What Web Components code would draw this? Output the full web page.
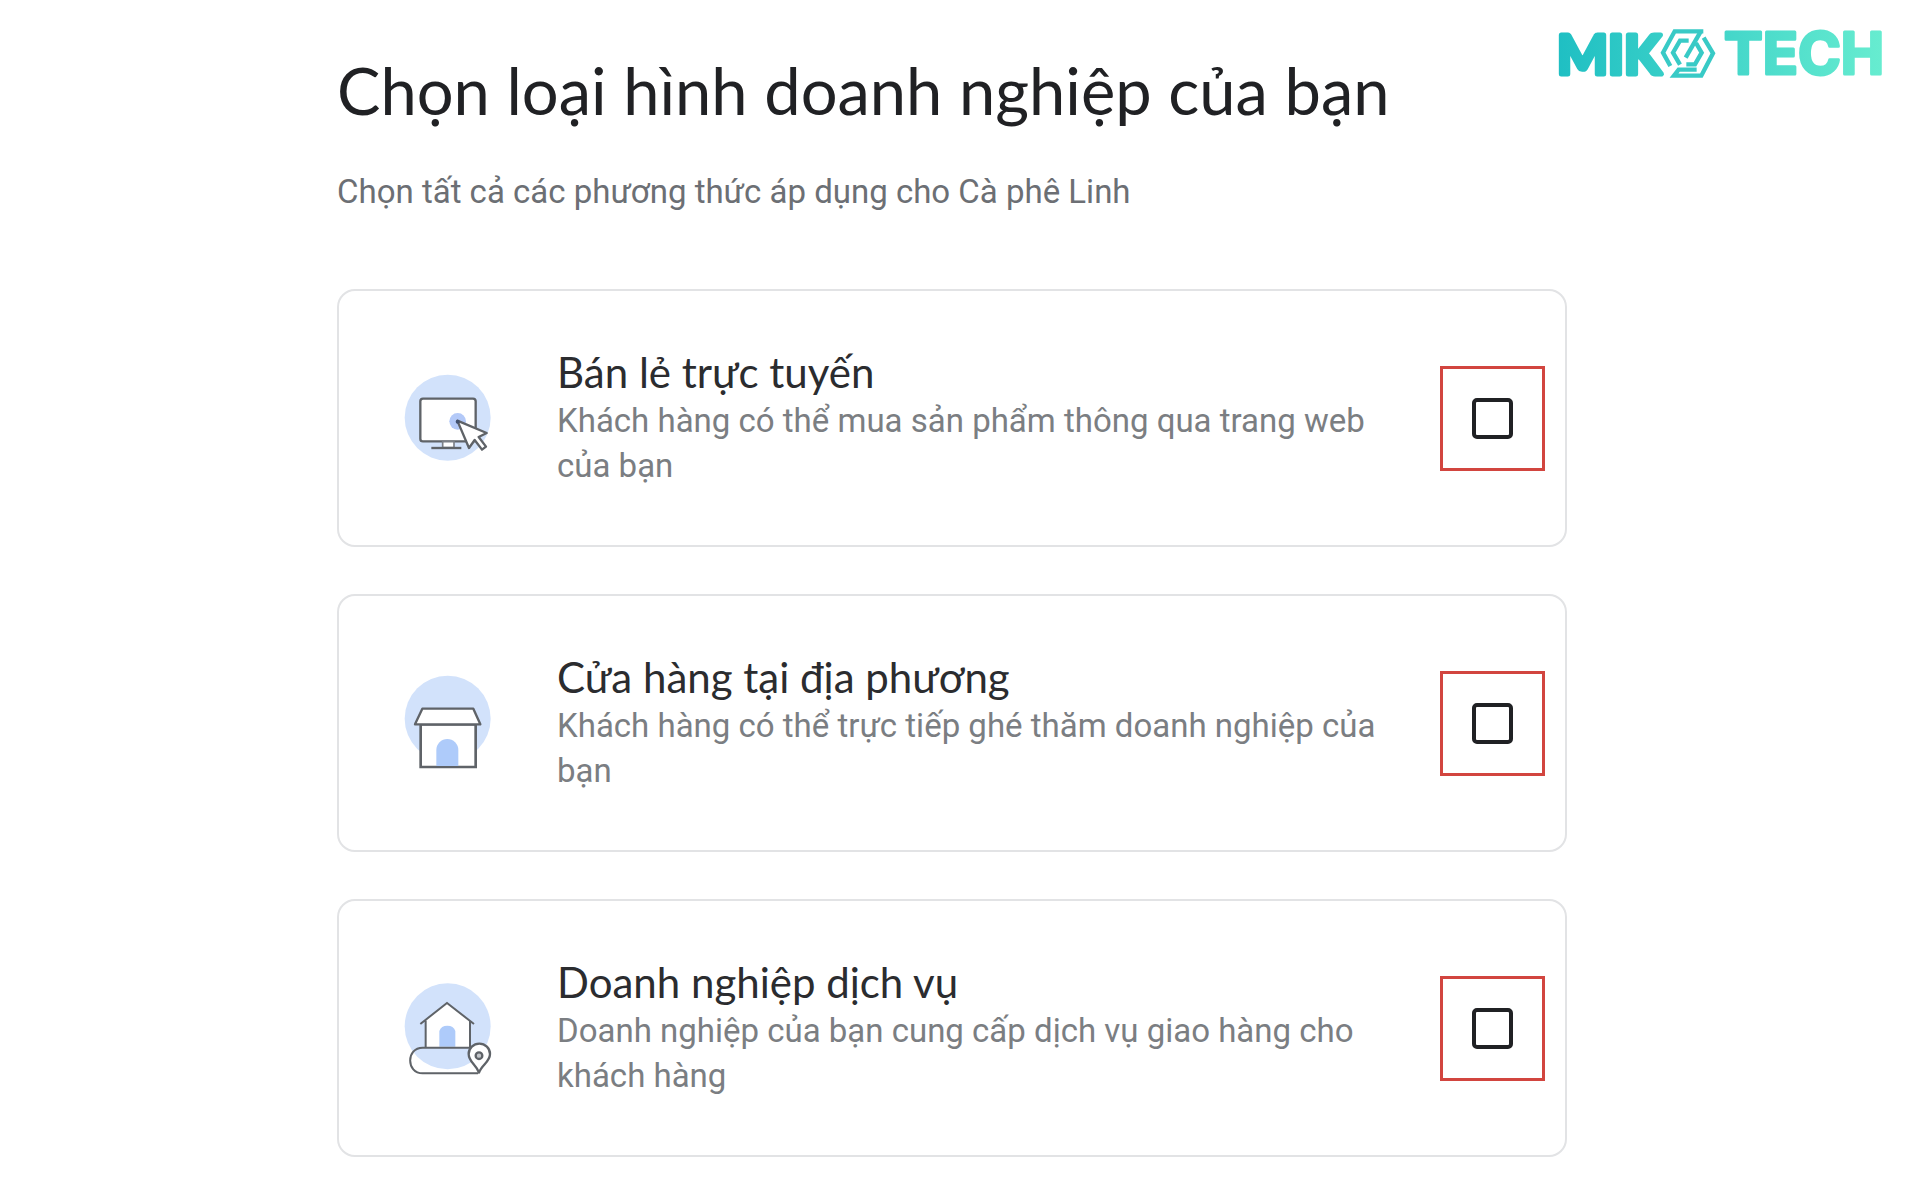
<!DOCTYPE html>
<html lang="vi">
<head>
<meta charset="UTF-8">
<meta name="viewport" content="width=device-width, initial-scale=1.0">
<title>Chọn loại hình doanh nghiệp của bạn</title>
<style>
  body { margin: 0; background-color: #fff; font-family: Roboto, "Open Sans", sans-serif; }
</style>
</head>
<body>
<business-page>
  <miko-logo slot="logo"></miko-logo>
  <span slot="title">Chọn loại hình doanh nghiệp của bạn</span>
  <span slot="subtitle">Chọn tất cả các phương thức áp dụng cho Cà phê Linh</span>
  <business-option icon="online">
    <span slot="name">Bán lẻ trực tuyến</span>
    Khách hàng có thể mua sản phẩm thông qua trang web của bạn
  </business-option>
  <business-option icon="store">
    <span slot="name">Cửa hàng tại địa phương</span>
    Khách hàng có thể trực tiếp ghé thăm doanh nghiệp của bạn
  </business-option>
  <business-option icon="service">
    <span slot="name">Doanh nghiệp dịch vụ</span>
    Doanh nghiệp của bạn cung cấp dịch vụ giao hàng cho khách hàng
  </business-option>
</business-page>

<script>
const icons = {
  online: `
    <svg viewBox="0 -4 360 360" aria-hidden="true">
      <circle cx="173" cy="175" r="129" fill="#d2e2fb"/>
      <rect x="91" y="118" width="166" height="128" rx="8" fill="#fff" stroke="#5f6368" stroke-width="7"/>
      <path d="M158 247h34v18h-34z" fill="#fff" stroke="#7c8086" stroke-width="5"/>
      <path d="M124 266h90" stroke="#5f6368" stroke-width="7"/>
      <circle cx="203" cy="186" r="25" fill="#b3c9f8"/>
      <path d="M202 184l35 82 17-24 22 29 12-9-22-29 24-12z" fill="#fff" stroke="#5f6368" stroke-width="7" stroke-linejoin="round"/>
      <circle cx="203" cy="187" r="6" fill="#41506e"/>
    </svg>`,
  store: `
    <svg viewBox="0 10 360 360" aria-hidden="true">
      <circle cx="173" cy="177" r="129" fill="#d2e2fb"/>
      <path d="M92 194h165v128H92z" fill="#fff" stroke="#5f6368" stroke-width="8"/>
      <path d="M97 147h153l21 47H75z" fill="#fff" stroke="#5f6368" stroke-width="7" stroke-linejoin="round"/>
      <path d="M139 319v-48a33 33 0 0 1 66 0v48z" fill="#aecbfa"/>
    </svg>`,
  service: `
    <svg viewBox="0 -8 360 360" aria-hidden="true">
      <circle cx="173" cy="167" r="129" fill="#d2e2fb"/>
      <path d="M107 230v-82l64-51 69 51v82z" fill="#fff"/>
      <path d="M91 160l80-63 81 63M107 150v80M240 150v80" fill="none" stroke="#5f6368" stroke-width="6"/>
      <path d="M148 228v-47a25 22 0 0 1 48 0v47z" fill="#aecbfa"/>
      <path d="M240 231H98c-50 0-50 77 0 77h166" fill="none" stroke="#5f6368" stroke-width="6"/>
      <path d="M267 306c-8-24-31-32-31-56a32 31 0 0 1 64 0c0 24-25 32-33 56z" fill="#fff" stroke="#5f6368" stroke-width="7" stroke-linejoin="round"/>
      <circle cx="267" cy="255" r="10" fill="#c4c7cb" stroke="#5f6368" stroke-width="7"/>
    </svg>`
};

class MikoLogo extends HTMLElement {
  constructor() {
    super();
    this.attachShadow({ mode: 'open' });
  }

  connectedCallback() {
    this.shadowRoot.innerHTML = `
      <style>
        :host { display: block; width: 344px; }
        svg { display: block; width: 100%; height: auto; }
        text { font-weight: 700; fill: url(#fade); stroke: url(#fade); stroke-linejoin: round; }
        .miko { font-family: Lato, "Open Sans", sans-serif; font-size: 54px; stroke-width: 5px; }
        .tech { font-family: Inter, "Open Sans", sans-serif; font-size: 58px; stroke-width: 3px; }
      </style>
      <svg viewBox="0 0 344 80" role="img" aria-label="MIKOTECH">
        <defs>
          <linearGradient id="fade" gradientUnits="userSpaceOnUse" x1="0" y1="0" x2="330" y2="0">
            <stop offset="0" stop-color="#1fbfc3"/>
            <stop offset="1" stop-color="#68edd0"/>
          </linearGradient>
        </defs>
        <text class="miko" x="-1" y="58">MIK</text>
        <g transform="translate(82 -1) scale(.3333)" fill="none" stroke="#38cac6" stroke-width="13">
          <path d="M190 49H104L69 113l22 40"/>
          <path d="M146 77h-26l-21 36 21 36"/>
          <path d="M182 50l-45 78"/>
          <path d="M168 84l17 29-20 35h-26"/>
          <path d="M191 68l28 47-35 67h-82l14-18h54"/>
        </g>
        <text class="tech" x="166" y="58">TECH</text>
      </svg>
    `;
  }
}
customElements.define('miko-logo', MikoLogo);

class BusinessOption extends HTMLElement {
  constructor() {
    super();
    this.attachShadow({ mode: 'open' });
  }

  connectedCallback() {
    this.shadowRoot.innerHTML = `
      <style>
        :host { display: block; border: 2px solid #e2e3e5; border-radius: 18px; }
        label { display: flex; align-items: center; padding: 0 20px 0 51px; min-height: 254px; cursor: pointer; }
        svg { display: block; width: 120px; height: 120px; flex: none; }
        .text { flex: 1; margin: 0 47px; }
        .name { padding-bottom: 2px; font-family: Lato, "Open Sans", sans-serif; font-size: 42px; line-height: 48px; color: #2b2c2f; }
        .description { font-size: 33px; line-height: 45px; color: #7b7e82; }
        .highlight { display: flex; align-items: center; justify-content: center; box-sizing: border-box; width: 105px; height: 105px; border: 3px solid #d2453f; }
        input { appearance: none; box-sizing: border-box; width: 41px; height: 41px; margin: 0; border: 4px solid #202124; border-radius: 5px; background-color: #fff; cursor: pointer; }
        input:checked { background-color: #1a73e8; }
      </style>
      <label>
        ${icons[this.getAttribute('icon')] || ''}
        <div class="text">
          <div class="name"><slot name="name"></slot></div>
          <div class="description"><slot></slot></div>
        </div>
        <div class="highlight"><input type="checkbox"></div>
      </label>
    `;
  }
}
customElements.define('business-option', BusinessOption);

class BusinessPage extends HTMLElement {
  constructor() {
    super();
    this.attachShadow({ mode: 'open' });
  }

  connectedCallback() {
    this.shadowRoot.innerHTML = `
      <style>
        :host { display: block; padding: 16px 18px 43px 337px; }
        header { display: flex; align-items: flex-start; justify-content: space-between; }
        h1 { margin: 38px 0 0; font-family: Lato, "Open Sans", sans-serif; font-weight: 400; font-size: 65px; line-height: 72px; color: #202124; }
        p { margin: 43px 0 0; font-size: 33px; line-height: 45px; color: #6c6f74; }
        section { display: grid; gap: 47px; margin: 75px 335px 0 0; }
      </style>
      <header>
        <div>
          <h1><slot name="title"></slot></h1>
          <p><slot name="subtitle"></slot></p>
        </div>
        <slot name="logo"></slot>
      </header>
      <section><slot></slot></section>
    `;
  }
}
customElements.define('business-page', BusinessPage);
</script>
</body>
</html>
